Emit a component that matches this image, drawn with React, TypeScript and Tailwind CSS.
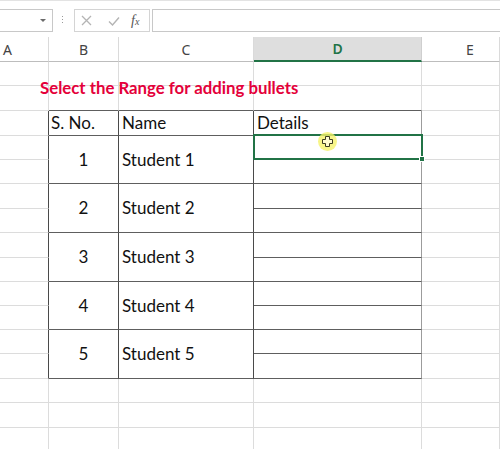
import React from 'react';

const GRID = 'border-r border-b border-r-[#dcdcdc] border-b-[#dcdcdc]';

const XIcon = () => (
  <svg width="11" height="11" viewBox="0 0 11 11" fill="none">
    <path d="M1 1 L10 10 M10 1 L1 10" stroke="#b4b4b4" strokeWidth="1.3" />
  </svg>
);

const CheckIcon = () => (
  <svg width="12" height="10" viewBox="0 0 12 10" fill="none">
    <path d="M1 5.5 L4.5 9 L11 1.5" stroke="#b4b4b4" strokeWidth="1.4" />
  </svg>
);

const FormulaBar = () => (
  <div className="flex h-[37px] items-start pt-[8px] border-t border-t-[#e3e3e3]">
    {/* Name box */}
    <div className="relative h-[23px] w-[53px] border border-l-0 border-[#c8c8c8]">
      <div className="absolute right-[6px] top-[9px] h-0 w-0 border-l-[3px] border-r-[3px] border-t-[3px] border-l-transparent border-r-transparent border-t-[#6a6a6a]" />
    </div>
    {/* grip */}
    <div className="ml-[9px] mt-[7px] flex flex-col gap-[2px]">
      <div className="h-[1px] w-[1px] bg-[#9a9a9a]" />
      <div className="h-[1px] w-[1px] bg-[#9a9a9a]" />
      <div className="h-[1px] w-[1px] bg-[#9a9a9a]" />
    </div>
    {/* cancel / enter / fx */}
    <div className="ml-[11px] flex h-[23px] w-[76px] items-center border border-[#d4d4d4] pl-[6px]">
      <XIcon />
      <div className="ml-[16px]">
        <CheckIcon />
      </div>
      <span className="ml-[11px] font-['Liberation_Serif',serif] text-[14px] italic leading-none text-[#555]">
        f<span className="text-[10px]">x</span>
      </span>
    </div>
    {/* formula input */}
    <div className="ml-[2px] h-[23px] flex-1 border border-r-0 border-[#c8c8c8]" />
  </div>
);

const ColumnHeaders = () => (
  <div className="grid h-[25px] grid-cols-[49px_70px_135px_168px_78px] font-['Noto_Sans',sans-serif] text-[14px] text-[#444]">
    <div className="flex items-center border-r border-b border-r-[#dadada] border-b-[#bdbdbd] pl-[3px]">A</div>
    <div className="flex items-center justify-center border-r border-b border-r-[#dadada] border-b-[#bdbdbd]">B</div>
    <div className="flex items-center justify-center border-r border-b border-r-[#dadada] border-b-[#bdbdbd]">C</div>
    <div className="flex items-center justify-center border-r border-b-2 border-r-[#cfcfcf] border-b-[#217346] bg-[#dedede] font-semibold text-[#217346]">
      D
    </div>
    <div className="flex items-center border-r border-b border-r-[#dadada] border-b-[#bdbdbd] pl-[44px]">E</div>
  </div>
);

const SelectedCell = () => (
  <div className="relative border-r border-b border-r-[#9c9c9c] border-b-[#5e5e5e]">
    {/* cell selection */}
    <div className="absolute -left-[1px] -top-[2px] h-[26px] w-[170px] border-2 border-[#217346]">
      <div className="absolute -bottom-[4px] -right-[4px] h-[6px] w-[6px] border border-white bg-[#217346]" />
    </div>
    {/* mouse highlight + cross cursor */}
    <div className="absolute left-[64px] -top-[4px] flex h-[19px] w-[19px] items-center justify-center rounded-full bg-[#f5f26a]/80">
      <svg width="11" height="11" viewBox="0 0 11 11">
        <path
          d="M3.5 0.5 H7.5 V3.5 H10.5 V7.5 H7.5 V10.5 H3.5 V7.5 H0.5 V3.5 H3.5 Z"
          fill="#fffbd0"
          stroke="#3b3b20"
          strokeWidth="1"
        />
      </svg>
    </div>
  </div>
);

const students = [1, 2, 3, 4, 5];

export default function App() {
  return (
    <div className="h-[449px] w-[500px] overflow-hidden bg-white">
      <FormulaBar />
      <ColumnHeaders />

      <div className="grid grid-cols-[49px_70px_135px_168px_78px] grid-rows-[24px_25px_25px_24px_24px_25px_24px_25px_24px_24px_24px_24px_25px_24px_25px_24px] font-[Lato,sans-serif] text-[17px] text-[#111]">
        {/* row: empty */}
        <div className={GRID} />
        <div className={GRID} />
        <div className={GRID} />
        <div className={GRID} />
        <div className={GRID} />

        {/* row: title */}
        <div className={GRID}>
          <div className="relative z-10 -mt-[11px] whitespace-nowrap pl-[40px] text-[16.8px] font-bold text-[#e4003a]">
            Select the Range for adding bullets
          </div>
        </div>
        <div className="border-r border-b border-r-[#dcdcdc] border-b-[#5e5e5e]" />
        <div className="border-r border-b border-r-[#dcdcdc] border-b-[#5e5e5e]" />
        <div className="border-r border-b border-r-[#dcdcdc] border-b-[#5e5e5e]" />
        <div className={GRID} />

        {/* row: table header */}
        <div className="border-r border-b border-r-[#4a4a4a] border-b-[#dcdcdc]" />
        <div className="flex items-center border-r border-b border-r-[#4a4a4a] border-b-[#5e5e5e] pl-[2px]">S. No.</div>
        <div className="flex items-center border-r border-b border-r-[#4a4a4a] border-b-[#5e5e5e] pl-[3px]">Name</div>
        <div className="flex items-center border-r border-b border-r-[#9c9c9c] border-b-[#5e5e5e] pl-[3px]">Details</div>
        <div className={GRID} />

        {/* table rows: S. No. and Name merged over two rows */}
        {students.map((n) => (
          <React.Fragment key={n}>
            <div className="border-r border-b border-r-[#4a4a4a] border-b-[#dcdcdc]" />
            <div className="row-span-2 flex items-center justify-center border-r border-b border-r-[#4a4a4a] border-b-[#5e5e5e]">
              {n}
            </div>
            <div className="row-span-2 flex items-center border-r border-b border-r-[#4a4a4a] border-b-[#5e5e5e] pl-[3px]">
              Student {n}
            </div>
            {n === 1 ? (
              <SelectedCell />
            ) : (
              <div className="border-r border-b border-r-[#9c9c9c] border-b-[#5e5e5e]" />
            )}
            <div className={GRID} />

            <div className="border-r border-b border-r-[#4a4a4a] border-b-[#dcdcdc]" />
            <div className="border-r border-b border-r-[#9c9c9c] border-b-[#5e5e5e]" />
            <div className={GRID} />
          </React.Fragment>
        ))}

        {/* rows below the table */}
        {[0, 1, 2].map((r) => (
          <React.Fragment key={r}>
            <div className={GRID} />
            <div className={GRID} />
            <div className={GRID} />
            <div className={GRID} />
            <div className={GRID} />
          </React.Fragment>
        ))}
      </div>
    </div>
  );
}
